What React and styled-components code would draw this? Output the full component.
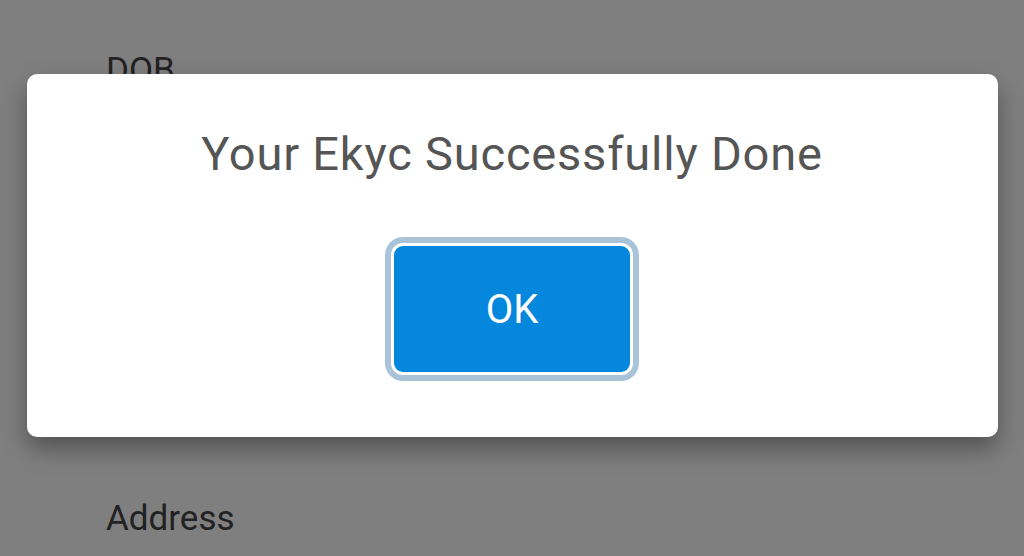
import React from 'react';
import styled, { createGlobalStyle } from 'styled-components';

const GlobalStyle = createGlobalStyle`
  html, body {
    margin: 0;
    padding: 0;
    width: 1024px;
    height: 556px;
    overflow: hidden;
    font-family: Roboto, "Noto Sans", sans-serif;
    background: #ffffff;
  }
`;

const Page = styled.div`
  position: relative;
  width: 1024px;
  height: 556px;
  overflow: hidden;
  background: #ffffff;
`;

const Form = styled.div`
  display: flex;
  flex-direction: column;
  padding: 51px 0 0 106px;
  gap: 408px;
`;

const FieldLabel = styled.div`
  font-size: 35px;
  line-height: 40px;
  color: #444;
`;

const Backdrop = styled.div`
  position: absolute;
  inset: 0;
  background: rgba(0, 0, 0, 0.5);
  display: flex;
  justify-content: center;
  align-items: flex-start;
  padding-top: 74px;
`;

const Dialog = styled.div`
  width: 971px;
  height: 363px;
  box-sizing: border-box;
  background: #ffffff;
  border-radius: 10px;
  box-shadow: 0 12px 24px rgba(0, 0, 0, 0.35);
  display: flex;
  flex-direction: column;
  align-items: center;
  padding-top: 52px;
`;

const Title = styled.h2`
  margin: 0;
  font-weight: 400;
  font-size: 47px;
  letter-spacing: 0.8px;
  line-height: 56px;
  color: #555555;
`;

const OkButton = styled.button`
  margin-top: 64px;
  width: 236px;
  height: 126px;
  box-sizing: border-box;
  border: none;
  border-radius: 9px;
  background: #0587dd;
  color: #ffffff;
  font-family: Roboto, "Noto Sans", sans-serif;
  font-size: 40px;
  box-shadow: 0 0 0 3px #ffffff, 0 0 0 9px #a9c4d8;
  cursor: pointer;
`;

export default function App() {
  return (
    <Page>
      <GlobalStyle />
      <Form>
        <FieldLabel>DOB</FieldLabel>
        <FieldLabel>Address</FieldLabel>
      </Form>
      <Backdrop>
        <Dialog>
          <Title>Your Ekyc Successfully Done</Title>
          <OkButton>OK</OkButton>
        </Dialog>
      </Backdrop>
    </Page>
  );
}
